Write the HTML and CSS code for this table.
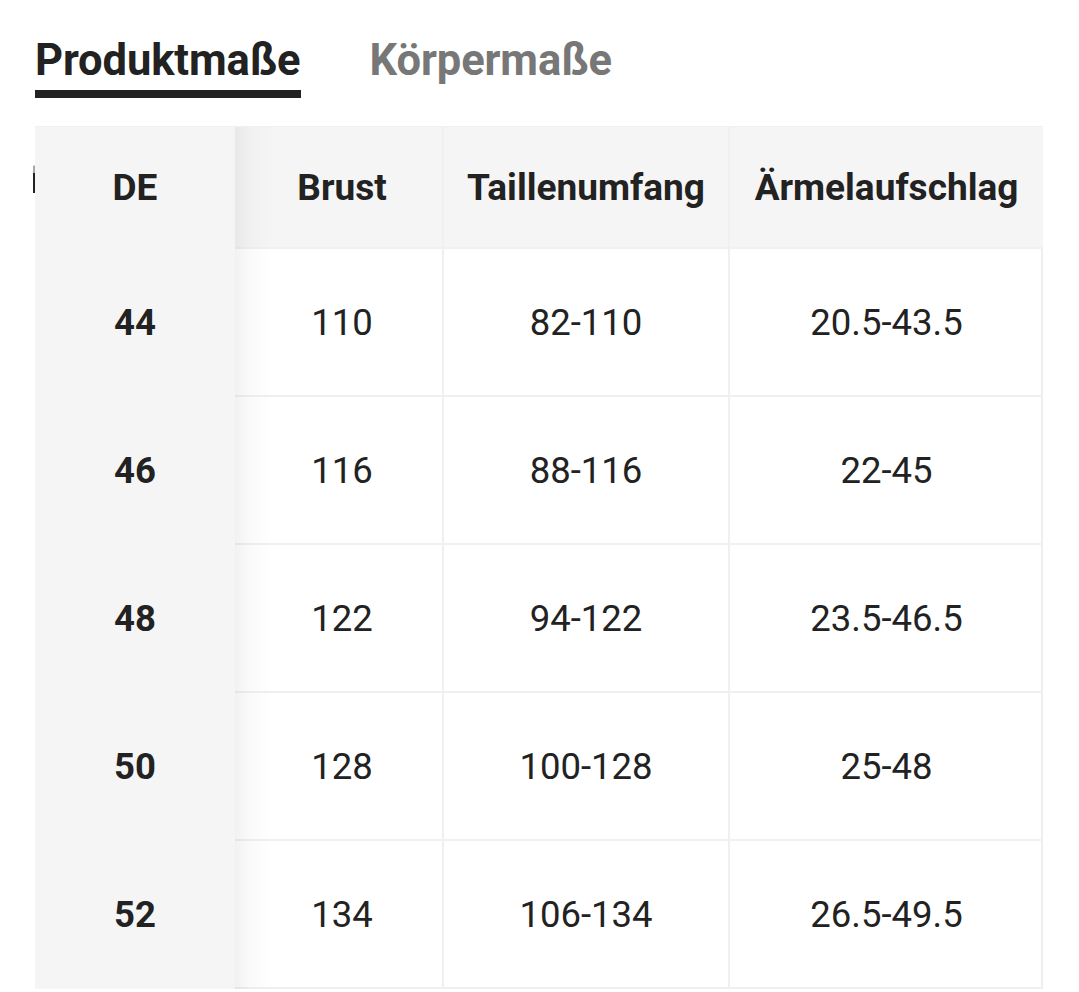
FILE: index.html
```html
<!DOCTYPE html>
<html lang="de">
<head>
<meta charset="utf-8">
<title>Größentabelle</title>
<link rel="stylesheet" href="styles.css">
</head>
<body>
<div class="page">
  <nav class="tabs">
    <div class="tab active">Produktmaße</div>
    <div class="tab">Körpermaße</div>
  </nav>
  <div class="table">
    <div class="cell head sticky peek">DE</div>
    <div class="cell head c2">Brust</div>
    <div class="cell head">Taillenumfang</div>
    <div class="cell head last">Ärmelaufschlag</div>

    <div class="cell sticky">44</div>
    <div class="cell c2">110</div>
    <div class="cell">82-110</div>
    <div class="cell last">20.5-43.5</div>

    <div class="cell sticky">46</div>
    <div class="cell c2">116</div>
    <div class="cell">88-116</div>
    <div class="cell last">22-45</div>

    <div class="cell sticky">48</div>
    <div class="cell c2">122</div>
    <div class="cell">94-122</div>
    <div class="cell last">23.5-46.5</div>

    <div class="cell sticky">50</div>
    <div class="cell c2">128</div>
    <div class="cell">100-128</div>
    <div class="cell last">25-48</div>

    <div class="cell sticky">52</div>
    <div class="cell c2">134</div>
    <div class="cell">106-134</div>
    <div class="cell last">26.5-49.5</div>
  </div>
</div>
</body>
</html>
```

FILE: styles.css
```css
html, body {
  margin: 0;
  padding: 0;
  background: #ffffff;
}

body {
  font-family: Roboto, "Liberation Sans", Arial, sans-serif;
  color: #222222;
}

.page {
  padding: 36px 0 0 35px;
}

.tabs {
  display: flex;
  gap: 69px;
}

.tab {
  font-size: 43.5px;
  font-weight: 700;
  line-height: 50px;
  color: #777777;
  letter-spacing: -0.1px;
  padding-bottom: 12px;
}

.tab.active {
  color: #222222;
  border-bottom: 8px solid #222222;
  padding-bottom: 2px;
}

.table {
  margin-top: 28px;
  width: 1008px;
  display: grid;
  grid-template-columns: 200px 209px 286px 313px;
  grid-auto-rows: 148px;
  grid-template-rows: 122px;
  border-top: 1px solid #f0f0f0;
  border-right: 2px solid #eeeeee;
  box-sizing: border-box;
}

.cell {
  display: flex;
  align-items: center;
  justify-content: center;
  font-size: 36.5px;
  border-bottom: 2px solid #f0f0f0;
  border-right: 2px solid #f0f0f0;
  position: relative;
  white-space: nowrap;
}

.cell.last {
  border-right: none;
}

.cell.head {
  background: #f5f5f5;
  font-weight: 700;
  font-size: 37px;
}

.cell.c2 {
  padding-left: 7px;
}

.sticky {
  background: #f5f5f5;
  font-weight: 700;
  border-right: none;
  border-bottom-color: #f5f5f5;
  z-index: 2;
}

.sticky::after {
  content: "";
  position: absolute;
  top: 0;
  bottom: -2px;
  left: 100%;
  width: 40px;
  background: linear-gradient(to right, rgba(0, 0, 0, 0.055), rgba(0, 0, 0, 0.02) 35%, rgba(0, 0, 0, 0));
  pointer-events: none;
}

.peek::before {
  content: "";
  position: absolute;
  left: -2px;
  top: 46px;
  width: 2px;
  height: 20px;
  background: #222222;
  box-shadow: 0 -8px 0 -0.5px #555555;
}
```
